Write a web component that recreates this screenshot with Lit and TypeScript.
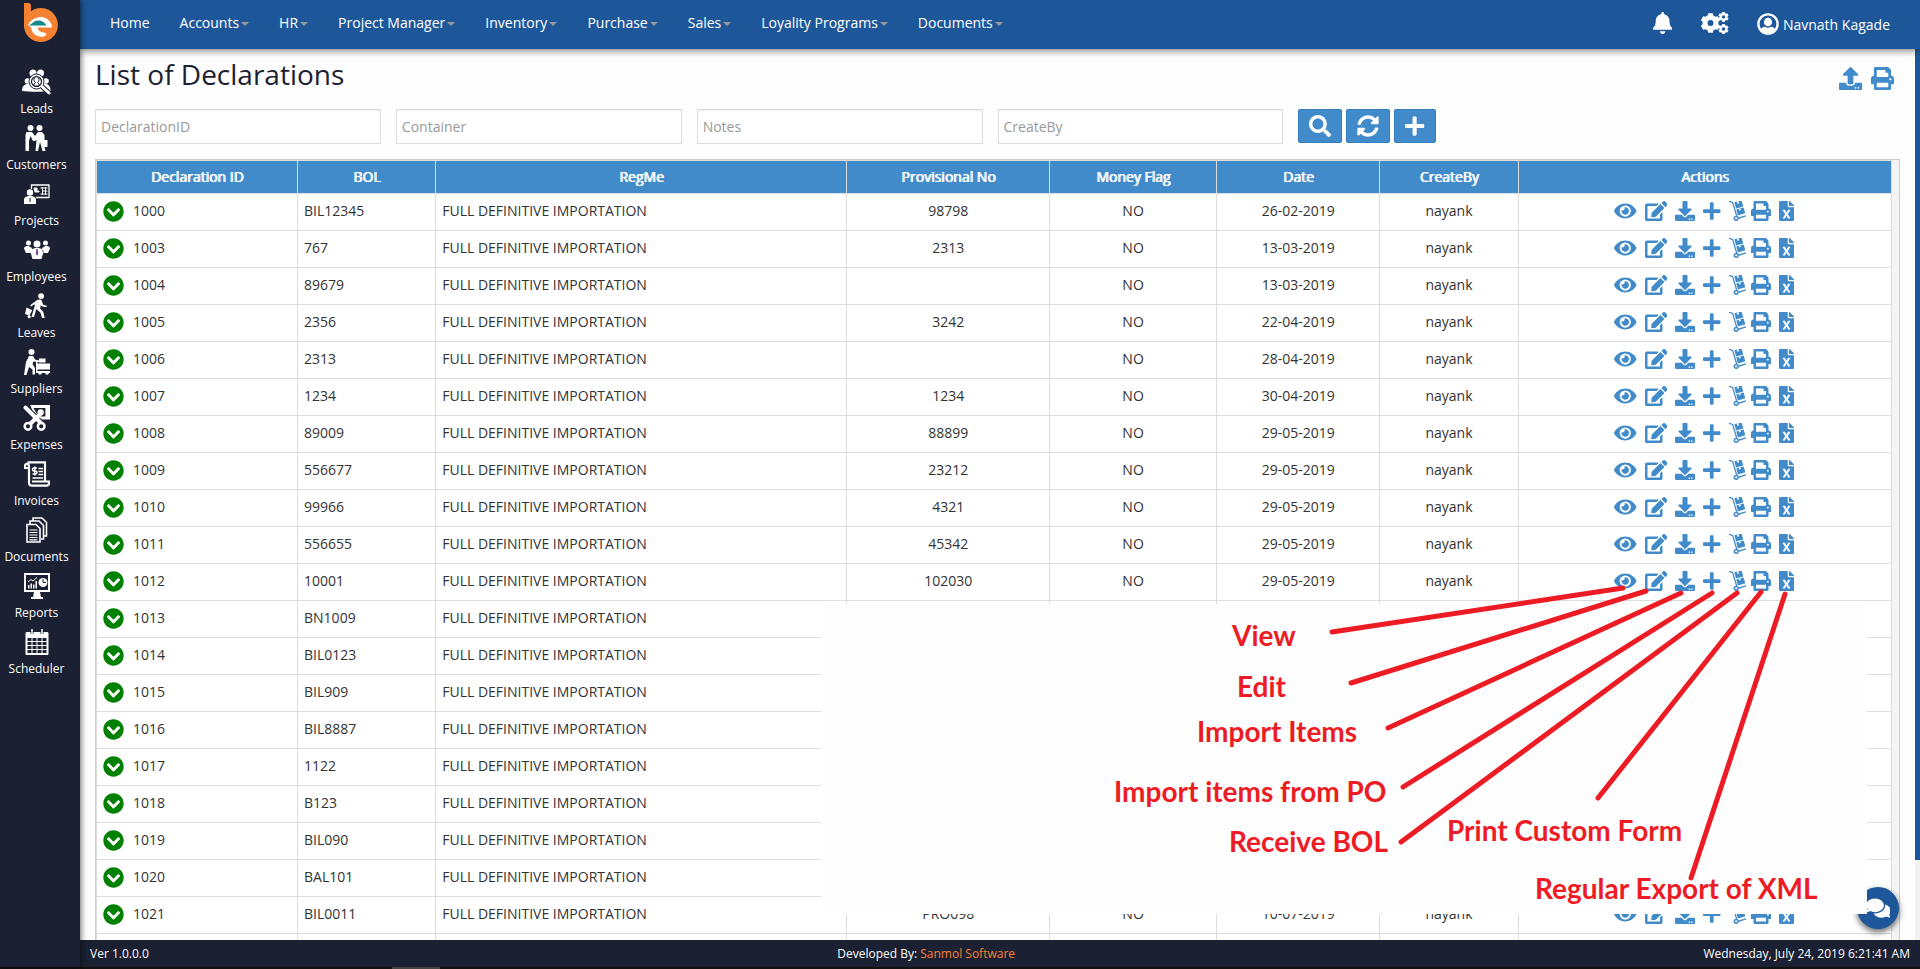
import { LitElement, html, css, svg, nothing } from "lit";
import { customElement, property } from "lit/decorators.js";

interface Glyph { w: number; h: number; body: unknown; }

const solid = (w: number, d: string): Glyph => ({ w, h: 512, body: svg`<path d=${d}></path>` });

/** Builds a toothed wheel outline with a round hole (even-odd). */
function gear(cx: number, cy: number, r: number, teeth: number, hole: number): string {
  const pts: string[] = [];
  const step = (Math.PI * 2) / teeth;
  for (let i = 0; i < teeth; i++) {
    const a = i * step + step / 2;
    for (const [off, rad] of [[-0.34, 0.8], [-0.22, 1], [0.22, 1], [0.34, 0.8]]) {
      const t = a + off * step;
      pts.push(`${(cx + Math.cos(t) * r * rad).toFixed(2)} ${(cy + Math.sin(t) * r * rad).toFixed(2)}`);
    }
  }
  return `M${pts.join("L")}Z M${cx - hole} ${cy}a${hole} ${hole} 0 1 0 ${hole * 2} 0a${hole} ${hole} 0 1 0 ${-hole * 2} 0Z`;
}

const DARK = "#1b2032";

const ICONS: Record<string, Glyph> = {
  bell: solid(448, "M224 512c35.32 0 63.97-28.65 63.97-64H160.03c0 35.35 28.65 64 63.97 64zm215.39-149.71c-19.32-20.76-55.47-51.99-55.47-154.29 0-77.7-54.48-139.9-127.94-155.16V32c0-17.67-14.32-32-31.98-32s-31.98 14.33-31.98 32v20.84C118.56 68.1 64.08 130.3 64.08 208c0 102.3-36.15 133.53-55.47 154.29-6 6.45-8.66 14.16-8.61 21.71.11 16.4 12.98 32 32.1 32h383.8c19.12 0 32-15.6 32.1-32 .05-7.55-2.61-15.27-8.61-21.71z"),
  eye: solid(576, "M572.52 241.4C518.29 135.59 410.93 64 288 64S57.68 135.64 3.48 241.41a32.35 32.35 0 0 0 0 29.19C57.71 376.41 165.07 448 288 448s230.32-71.64 284.52-177.41a32.35 32.35 0 0 0 0-29.19zM288 400a144 144 0 1 1 144-144 143.93 143.93 0 0 1-144 144zm0-240a95.31 95.31 0 0 0-25.31 3.79 47.85 47.85 0 0 1-66.9 66.9A95.78 95.78 0 1 0 288 160z"),
  edit: solid(576, "M402.6 83.2l90.2 90.2c3.8 3.8 3.8 10 0 13.8L274.4 405.6l-92.8 10.3c-12.4 1.4-22.9-9.1-21.5-21.5l10.3-92.8L388.8 83.2c3.8-3.8 10-3.8 13.8 0zm162-22.9l-48.8-48.8c-15.2-15.2-39.9-15.2-55.2 0l-35.4 35.4c-3.8 3.8-3.8 10 0 13.8l90.2 90.2c3.8 3.8 10 3.8 13.8 0l35.4-35.4c15.2-15.3 15.2-40 0-55.2zM384 346.2V448H64V128h229.8c3.2 0 6.2-1.3 8.5-3.5l40-40c7.6-7.6 2.2-20.5-8.5-20.5H48C21.5 64 0 85.5 0 112v352c0 26.5 21.5 48 48 48h352c26.5 0 48-21.5 48-48V306.2c0-10.7-12.9-16-20.5-8.5l-40 40c-2.2 2.3-3.5 5.3-3.5 8.5z"),
  download: solid(512, "M216 0h80c13.3 0 24 10.7 24 24v168h87.7c17.8 0 26.7 21.5 14.1 34.1L269.7 378.3c-7.5 7.5-19.8 7.5-27.3 0L90.1 226.1c-12.6-12.6-3.7-34.1 14.1-34.1H192V24c0-13.3 10.7-24 24-24zm296 376v112c0 13.3-10.7 24-24 24H24c-13.3 0-24-10.7-24-24V376c0-13.3 10.7-24 24-24h146.7l49 49c20.1 20.1 52.5 20.1 72.6 0l49-49H488c13.3 0 24 10.7 24 24zm-124 88c0-11-9-20-20-20s-20 9-20 20 9 20 20 20 20-9 20-20zm64 0c0-11-9-20-20-20s-20 9-20 20 9 20 20 20 20-9 20-20z"),
  upload: solid(512, "M296 384h-80c-13.3 0-24-10.7-24-24V192h-87.7c-17.8 0-26.7-21.5-14.1-34.1L242.3 5.7c7.5-7.5 19.8-7.5 27.3 0l152.2 152.2c12.6 12.6 3.7 34.1-14.1 34.1H320v168c0 13.3-10.7 24-24 24zm216-8v112c0 13.3-10.7 24-24 24H24c-13.3 0-24-10.7-24-24V376c0-13.3 10.7-24 24-24h136v8c0 30.9 25.1 56 56 56h80c30.9 0 56-25.1 56-56v-8h136c13.3 0 24 10.7 24 24zm-124 88c0-11-9-20-20-20s-20 9-20 20 9 20 20 20 20-9 20-20zm64 0c0-11-9-20-20-20s-20 9-20 20 9 20 20 20 20-9 20-20z"),
  plus: solid(448, "M416 208H272V64c0-17.67-14.33-32-32-32h-32c-17.67 0-32 14.33-32 32v144H32c-17.67 0-32 14.33-32 32v32c0 17.67 14.33 32 32 32h144v144c0 17.67 14.33 32 32 32h32c17.67 0 32-14.33 32-32V304h144c17.67 0 32-14.33 32-32v-32c0-17.67-14.33-32-32-32z"),
  print: solid(512, "M448 192V77.25c0-8.49-3.37-16.62-9.37-22.63L393.37 9.37c-6-6-14.14-9.37-22.63-9.37H96C78.33 0 64 14.33 64 32v160c-35.35 0-64 28.65-64 64v112c0 8.84 7.16 16 16 16h48v96c0 17.67 14.33 32 32 32h320c17.67 0 32-14.33 32-32v-96h48c8.84 0 16-7.16 16-16V256c0-35.35-28.65-64-64-64zm-64 256H128v-96h256v96zm0-224H128V64h192v48c0 8.84 7.16 16 16 16h48v96zm48 72c-13.25 0-24-10.75-24-24 0-13.26 10.75-24 24-24s24 10.74 24 24c0 13.25-10.75 24-24 24z"),
  excel: solid(384, "M224 136V0H24C10.7 0 0 10.7 0 24v464c0 13.3 10.7 24 24 24h336c13.3 0 24-10.7 24-24V160H248c-13.2 0-24-10.8-24-24zm60.1 106.5L224 336l60.1 93.5c5.1 8-.6 18.5-10.1 18.5h-34.9c-4.4 0-8.5-2.4-10.6-6.3C208.9 405.5 192 373 192 373c-6.4 14.8-10 20-36.6 68.8-2.1 3.9-6.1 6.3-10.5 6.3H110c-9.5 0-15.2-10.5-10.1-18.5l60.3-93.5-60.3-93.5c-5.2-8 .6-18.5 10.1-18.5h34.8c4.4 0 8.5 2.4 10.6 6.3 26.1 48.8 20 33.6 36.6 68.5 0 0 6.1-11.7 36.6-68.5 2.1-3.9 6.2-6.3 10.6-6.3H274c9.5-.1 15.2 10.4 10.1 18.4zM384 121.9v6.1H256V0h6.1c6.4 0 12.5 2.5 17 7l97.9 98c4.5 4.5 7 10.6 7 16.9z"),
  search: solid(512, "M505 442.7L405.3 343c-4.5-4.5-10.6-7-17-7H372c27.6-35.3 44-79.7 44-128C416 93.1 322.9 0 208 0S0 93.1 0 208s93.1 208 208 208c48.3 0 92.7-16.4 128-44v16.3c0 6.4 2.5 12.5 7 17l99.7 99.7c9.4 9.4 24.6 9.4 33.9 0l28.3-28.3c9.4-9.4 9.4-24.6.1-34zM208 336c-70.7 0-128-57.2-128-128 0-70.7 57.2-128 128-128 70.7 0 128 57.2 128 128 0 70.7-57.2 128-128 128z"),
  refresh: solid(512, "M370.72 133.28C339.458 104.008 298.888 87.962 255.848 88c-77.458.068-144.328 53.178-162.791 126.85-1.344 5.363-6.122 9.15-11.651 9.15H24.103c-7.498 0-13.194-6.807-11.807-14.176C33.933 94.924 134.813 8 256 8c66.448 0 126.791 26.136 171.315 68.685L463.03 40.97C478.149 25.851 504 36.559 504 57.941V192c0 13.255-10.745 24-24 24H345.941c-21.382 0-32.09-25.851-16.971-40.971l41.75-41.749zM32 296h134.059c21.382 0 32.09 25.851 16.971 40.971l-41.75 41.75c31.262 29.273 71.835 45.319 114.876 45.28 77.418-.07 144.315-53.144 162.787-126.849 1.344-5.363 6.122-9.15 11.651-9.15h57.304c7.498 0 13.194 6.807 11.807 14.176C478.067 417.076 377.187 504 256 504c-66.448 0-126.791-26.136-171.315-68.685L48.97 471.03C33.851 486.149 8 475.441 8 454.059V320c0-13.255 10.745-24 24-24z"),
  expand: solid(512, "M504 256c0 137-111 248-248 248S8 393 8 256 119 8 256 8s248 111 248 248zM273 369.9l135.5-135.5c9.4-9.4 9.4-24.6 0-33.9l-17-17c-9.4-9.4-24.6-9.4-33.9 0L256 285.1 154.4 183.5c-9.4-9.4-24.6-9.4-33.9 0l-17 17c-9.4 9.4-9.4 24.6 0 33.9L239 369.9c9.4 9.4 24.6 9.4 34 0z"),
  comments: solid(576, "M416 192c0-88.4-93.1-160-208-160S0 103.6 0 192c0 34.3 14.1 65.9 38 92-13.4 30.2-35.5 54.2-35.8 54.5-2.2 2.3-2.8 5.7-1.5 8.7S4.8 352 8 352c36.6 0 66.9-12.3 88.7-25 32.2 15.7 70.3 25 111.3 25 114.9 0 208-71.6 208-160zm122 220c23.9-26 38-57.7 38-92 0-66.9-53.5-124.2-129.3-148.1.9 6.6 1.3 13.3 1.3 20.1 0 105.9-107.7 192-240 192-10.8 0-21.3-.8-31.7-1.9C207.8 439.6 281.8 480 368 480c41 0 79.1-9.2 111.3-25 21.8 12.7 52.1 25 88.7 25 3.2 0 6.1-1.9 7.3-4.8 1.3-2.9.7-6.3-1.5-8.7-.3-.3-22.4-24.2-35.8-54.5z"),
  cogs: { w: 28, h: 22, body: svg`<path fill-rule="evenodd" d=${gear(9.5, 11, 10, 6, 3)}></path><path fill-rule="evenodd" d=${gear(22.5, 4.9, 5.2, 6, 1.7)}></path><path fill-rule="evenodd" d=${gear(22.5, 17, 5.2, 6, 1.7)}></path>` },
  user: { w: 22, h: 22, body: svg`<circle cx="11" cy="11" r="9.600" fill="none" stroke="currentColor" stroke-width="2.400"></circle><ellipse cx="11" cy="9" rx="4.100" ry="4.300"></ellipse><path d="M3.600 17c1-2.400 3-3.300 4.800-3.100 1.600 1 3.600 1 5.200 0 1.800-.2 3.800.7 4.800 3.100-4 4.600-10.800 4.600-14.800 0z"></path>` },
  dolly: { w: 17, h: 20, body: svg`<path d="M0 .3l3.600 1.100L7.700 15" fill="none" stroke="currentColor" stroke-width="1.300"></path><circle cx="7.200" cy="17.300" r="1.900" fill="none" stroke="currentColor" stroke-width="1.500"></circle><path d="M9.300 16.600l7.500-2.400.4 1.300-7.500 2.400z"></path><path d="M5.400 1.300l2.400-.7.600 2.200 1.600-.4-.6-2.200 3.200-.6 1.700 6-7.300 2z"></path><path d="M7.300 8.500l2.400-.7.500 1.800 1.600-.5-.5-1.800 3.300-.8 1.700 5.700-7.400 2.200z"></path>` },
  logo: { w: 36, h: 42, body: svg`<path d="M1 0h4.500C7.200 0 8 1.300 8 3v5.200A17 17 0 1 1 1 24z" fill="#f58233"></path><path d="M5 22.500C8 14 23 9 28.800 22v2.500H14.500c1 5 5.500 4.500 8.500 5.500 1 2-1.500 4-4.500 3.800-6.500-.4-10-4.300-10.500-9.800z" fill="#fff"></path><path d="M5 22.600c4-1 5.500-5 10-5 4 0 6.500 1.600 8.500 5z" fill="#138a8a"></path>` },
  leads: { w: 29, h: 26, body: svg`<circle cx="11" cy="4" r="3.500"></circle><circle cx="18.500" cy="4" r="3.500"></circle><path d="M6 13a8 6 0 0 1 17 0v8H6z"></path><circle cx="5.500" cy="12" r="2.800"></circle><circle cx="24" cy="12" r="2.800"></circle><path d="M0 22c0-5 2.500-7 5.500-7h18c3 0 5 2 5 7-7 1-21 1-28.500 0z"></path><circle cx="14.500" cy="12.500" r="7.500" fill="#fff" stroke=${DARK} stroke-width="1"></circle><circle cx="14.500" cy="12.500" r="5" fill="#fff" stroke=${DARK} stroke-width="1.200"></circle><path d="M12 17v-2l1.500-1.500a2.500 3 0 1 1 2 0L17 15v2z" fill="#fff" stroke=${DARK}></path><path d="M20 17.500l7.500 7" stroke=${DARK} stroke-width="5"></path><path d="M20 17.500l7 6.500" stroke="#fff" stroke-width="3" stroke-linecap="round"></path>` },
  customers: { w: 26, h: 26, body: svg`<circle cx="6.500" cy="3" r="3"></circle><circle cx="15.500" cy="3" r="3"></circle><path d="M2.500 7h5.500l3 4 3-4h4l2.500 3v5h3v7h-3l1 4h-3l-2.500-9-2 9h-2.500l1-11-2 1h-1.500L6.500 11 5 16v10H1.500V10z"></path>` },
  projects: { w: 26, h: 20, body: svg`<path d="M7.500 5V1H25v12.500H12" fill="none" stroke="currentColor" stroke-width="1.300"></path><path d="M10 4h3v3h2v1h-4zM16.500 4h7M19 7h4.500M16.500 10h7M18.500 3v8M21.500 3v8" stroke="currentColor"></path><circle cx="6" cy="8.500" r="3.200"></circle><path d="M0 20v-4c0-3 2.500-4 6-4s6 1 6 4v4z"></path><path d="M6 14v4" stroke=${DARK}></path>` },
  employees: { w: 26, h: 20, body: svg`<circle cx="13" cy="4" r="3.500"></circle><circle cx="4.500" cy="3" r="2.500"></circle><circle cx="21.500" cy="3" r="2.500"></circle><path d="M0 8.500c0-2 2-2.500 4.500-2.500L8 8l-1 5H2zM26 8.500c0-2-2-2.500-4.500-2.500L18 8l1 5h5zM6.500 12c0-3 3-4 6.500-4s6.500 1 6.500 4l-2 7h-9z"></path><path d="M12.300 9h1.500l.5 5-1.200 1.500L11.800 14z" fill="#7a4a9a"></path>` },
  leaves: { w: 22, h: 25, body: svg`<circle cx="15.500" cy="3" r="2.800"></circle><path d="M12 6.500l3.500-.2 2 5 3.500 1-.5 1.500-4.500-1-.8-1.200-.7 3.400 3 3 1.500 6h-2.600l-1.500-5-4-3.500-2.200 7.500H6.200L9.500 12l-.6-1.200-3 2.200-1-1.200zM1.500 14l5.500 2.500-3 5.500L0 20z"></path><circle cx="4" cy="22.800" r="1.500"></circle>` },
  suppliers: { w: 26, h: 26, body: svg`<circle cx="7.500" cy="3" r="3"></circle><path d="M5 7h4l2 3.500 4 1V13l-5.500-.5L8.500 15l2.500 4v6.500H8.500v-5L5 18l-2.500 8H0L2 13zM15 9.500h6.500v4H15zM13 14.500h13v6H13zM12 12h1.500v10H26v2H12z"></path><circle cx="16" cy="24" r="1.800"></circle><circle cx="23" cy="24" r="1.800"></circle>` },
  expenses: { w: 26, h: 25, body: svg`<path d="M7 0h19v14H12z"></path><path d="M10 3h11.500v8H15z" fill=${DARK}></path><circle cx="17" cy="7" r="3"></circle><path d="M2.500 2.500L18 18" stroke=${DARK} stroke-width="6"></path><path d="M2.500 2.500L18 18M17.500 8L6 19" stroke="currentColor" stroke-width="4" stroke-linecap="round"></path><circle cx="4.800" cy="20.500" r="3.200" fill=${DARK} stroke="currentColor" stroke-width="2.400"></circle><circle cx="17.500" cy="20.500" r="3.200" fill=${DARK} stroke="currentColor" stroke-width="2.400"></circle>` },
  invoices: { w: 26, h: 26, body: svg`<path d="M5 22.500V5.500C5 2 1 2 1 5v2h3.500M3.500 1.300H21V20M8 20.500h17c.5 3-1 4.200-3 4.200H8c-2 0-3-1-3-3" fill="none" stroke="currentColor" stroke-width="2.200"></path><path d="M13 7H10a1.500 1.500 0 0 0 0 3h1.500a1.500 1.500 0 0 1 0 3H8.500M10.800 5.500v9M14.500 7.500h4.500M14.500 10.500h4.500M14.500 13.500h4.500M8.500 17h10.500" fill="none" stroke="currentColor" stroke-width="1.500"></path>` },
  documents: { w: 22, h: 26, body: svg`<path d="M1 7.500h9l4 4V25H1zM4 7V4h9l4.500 4.500V22H15M7 3.500V1h9l4.500 4.500V19H18" fill="none" stroke="currentColor" stroke-width="1.600"></path><path d="M3.500 13h8M3.500 15.500h8M3.500 18h8M3.500 20.500h8M3.500 22.800h8" stroke="currentColor" stroke-width="1.200"></path>` },
  reports: { w: 26, h: 26, body: svg`<path d="M1 1h24v17H1z" fill="none" stroke="currentColor" stroke-width="2"></path><path d="M10 19h6l1 5h2v2H7v-2h2zM4 12h1.500v3.500H4zM6.500 10.500H8v5H6.500zM9 11.500h1.500v4H9zM11.500 8H13v7.500h-1.500z"></path><path d="M4 9l3-2.500 2 1.500 4-3.500" fill="none" stroke="currentColor"></path><circle cx="19" cy="9.500" r="4.500"></circle><path d="M19 6v3.500h3" fill="none" stroke=${DARK}></path>` },
  scheduler: { w: 24, h: 26, body: svg`<path fill-rule="evenodd" d="M2 3h20c1 0 1.500.5 1.500 1.500v20c0 1-.5 1.500-1.500 1.500H2C1 26 .5 25.500 .5 24.500v-20C.5 3.500 1 3 2 3zM2.500 9v3h4V9zm5 0v3h4V9zm5 0v3h4V9zm5 0v3h4V9zm-15 4v3h4v-3zm5 0v3h4v-3zm5 0v3h4v-3zm5 0v3h4v-3zm-15 4v3h4v-3zm5 0v3h4v-3zm5 0v3h4v-3zm5 0v3h4v-3zm-15 4v3h4v-3zm5 0v3h4v-3zm5 0v3h4v-3zm5 0v3h4v-3z"></path><path d="M7 0v5M17 0v5" stroke=${DARK} stroke-width="3"></path><path d="M7 0v5M17 0v5" stroke="currentColor" stroke-width="1.500"></path>` },
};

@customElement("ui-icon")
export class UiIcon extends LitElement {
  @property() name = "";
  static styles = css`
    :host { display: inline-flex; height: 20px; }
    svg { display: block; height: 100%; width: auto; fill: currentColor; }
  `;
  render() {
    const g = ICONS[this.name];
    return g
      ? html`<svg viewBox="0 0 ${g.w} ${g.h}" aria-hidden="true" preserveAspectRatio="xMidYMid meet">${g.body}</svg>`
      : nothing;
  }
}

const MODULES = ["Leads", "Customers", "Projects", "Employees", "Leaves", "Suppliers", "Expenses", "Invoices", "Documents", "Reports", "Scheduler"];
const MENU = ["Home", "Accounts", "HR", "Project Manager", "Inventory", "Purchase", "Sales", "Loyality Programs", "Documents"];
const FILTERS = ["DeclarationID", "Container", "Notes", "CreateBy"];
const COLUMNS = ["Declaration ID", "BOL", "RegMe", "Provisional No", "Money Flag", "Date", "CreateBy", "Actions"];
const ACTIONS: [string, string][] = [
  ["eye", "View"], ["edit", "Edit"], ["download", "Import items"], ["plus", "Import items from PO"],
  ["dolly", "Receive BOL"], ["print", "Print custom form"], ["excel", "Regular export of XML"],
];

interface Declaration { id: string; bol: string; provisional?: string; date?: string; }
const ROWS: Declaration[] = [
  { id: "1000", bol: "BIL12345", provisional: "98798", date: "26-02-2019" },
  { id: "1003", bol: "767", provisional: "2313", date: "13-03-2019" },
  { id: "1004", bol: "89679", provisional: "", date: "13-03-2019" },
  { id: "1005", bol: "2356", provisional: "3242", date: "22-04-2019" },
  { id: "1006", bol: "2313", provisional: "", date: "28-04-2019" },
  { id: "1007", bol: "1234", provisional: "1234", date: "30-04-2019" },
  { id: "1008", bol: "89009", provisional: "88899", date: "29-05-2019" },
  { id: "1009", bol: "556677", provisional: "23212", date: "29-05-2019" },
  { id: "1010", bol: "99966", provisional: "4321", date: "29-05-2019" },
  { id: "1011", bol: "556655", provisional: "45342", date: "29-05-2019" },
  { id: "1012", bol: "10001", provisional: "102030", date: "29-05-2019" },
  { id: "1013", bol: "BN1009" },
  { id: "1014", bol: "BIL0123" },
  { id: "1015", bol: "BIL909" },
  { id: "1016", bol: "BIL8887" },
  { id: "1017", bol: "1122" },
  { id: "1018", bol: "B123" },
  { id: "1019", bol: "BIL090" },
  { id: "1020", bol: "BAL101" },
  { id: "1021", bol: "BIL0011", provisional: "PRO098", date: "10-07-2019" },
];

/** Callouts of the legend: text, its origin, and the pointer running to the icon. */
interface Callout { text: string; x: number; y: number; line: [number, number, number, number]; }
const CALLOUTS: Callout[] = [
  { text: "View", x: 411, y: 76, line: [511, 62, 802, 18] },
  { text: "Edit", x: 416, y: 127, line: [530, 113, 825, 21] },
  { text: "Import Items", x: 376, y: 172, line: [567, 158, 860, 23] },
  { text: "Import items from PO", x: 293, y: 232, line: [582, 217, 891, 23] },
  { text: "Receive BOL", x: 408, y: 282, line: [580, 272, 916, 23] },
  { text: "Print Custom Form", x: 626, y: 271, line: [777, 228, 940, 22] },
  { text: "Regular Export of XML", x: 714, y: 329, line: [870, 308, 964, 24] },
];

@customElement("app-root")
export class AppRoot extends LitElement {
  static styles = css`
    :host {
      display: flex;
      flex-direction: column;
      height: 100vh;
      position: relative;
      overflow: hidden;
      background: #fefefe;
      color: #333;
      font: 14px/20px "Open Sans", "Noto Sans", sans-serif;
    }
    * { box-sizing: border-box; }
    a { color: inherit; text-decoration: none; }
    button { font: inherit; color: inherit; border: 0; padding: 0; background: none; cursor: pointer; display: inline-flex; align-items: center; justify-content: center; }
    .shell { flex: 1; display: flex; min-height: 0; }
    .side { width: 80px; flex: none; background: #1b2032; color: #fff; padding: 3px 7px 0 0; z-index: 2; box-shadow: 1px 0 6px rgba(0, 0, 0, 0.6); }
    .brand { display: flex; justify-content: center; padding: 0 0 0 8px; }
    .brand ui-icon { height: 42px; }
    .modules { list-style: none; margin: 20px 0 0; padding: 0; }
    .module { height: 56px; display: flex; flex-direction: column; align-items: center; gap: 2px; font-size: 12px; line-height: 18px; }
    .glyph { height: 33px; display: flex; align-items: center; justify-content: center; }
    .i26 { height: 26px; }
    .i20 { height: 20px; }
    .column { flex: 1; min-width: 0; display: flex; flex-direction: column; }
    .top { height: 49px; flex: none; background: #1e5799; color: #fff; display: flex; align-items: center; padding: 0 30px 0 15px; z-index: 1; box-shadow: 0 1px 8px rgba(0, 0, 0, 0.6); }
    .menu { display: flex; flex: 1; list-style: none; margin: 0; padding: 0 0 4px; }
    .menu a { display: flex; align-items: center; gap: 2px; padding: 0 15px; }
    .caret { border: 4px solid transparent; border-top-color: #999; border-bottom: 0; margin-top: 3px; }
    .user { display: flex; align-items: center; }
    .user ui-icon { height: 22px; }
    .tools { display: flex; gap: 29px; margin-right: 28px; padding-bottom: 3px; }
    .who { gap: 4px; }
    .who ui-icon { margin-bottom: 2px; }
    .body { flex: 1; min-height: 0; display: flex; }
    .track { width: 5px; background: #f1f1f1; flex: none; }
    .thumb { height: 91%; background: #1e5799; }
    main { flex: 1; min-width: 0; padding: 0 15px; display: flex; flex-direction: column; overflow: hidden; }
    .heading { display: flex; flex: none; height: 60px; align-items: flex-start; justify-content: space-between; padding: 5px 6px 0 0; }
    h1 { margin: 0; font-size: 28px; line-height: 40px; font-weight: 400; color: #1b2032; }
    .heading div { display: flex; gap: 9px; padding-top: 13px; color: #428bca; }
    .heading ui-icon { height: 23px; }
    .filters { display: grid; grid-template-columns: repeat(6, 1fr); flex: none; margin-bottom: 15px; }
    .field { padding-right: 15px; display: block; }
    .field input { display: block; width: 100%; height: 35px; border: 1px solid #ddd; border-radius: 0; background: #fff; padding: 0 5px; font: inherit; color: #333; box-shadow: inset 0 1px 1px rgba(0, 0, 0, 0.075); }
    .field input::placeholder { color: #999; opacity: 1; }
    .buttons { display: flex; gap: 4px; }
    .buttons button { height: 34px; padding: 0 10px; background: #428bca; border: 1px solid #357ebd; border-radius: 2px; color: #fff; }
    .buttons ui-icon { height: 22px; }
    .grid { flex: 1; min-height: 0; overflow: hidden; display: flex; align-items: flex-start; border: 1px solid #ccc; border-bottom: 0; background: #f4f4f4; padding-right: 7px; }
    table { width: 100%; border-collapse: collapse; table-layout: fixed; background: #fff; }
    th, td { border: 1px solid #ddd; padding: 0 6px; height: 37px; text-align: left; font-weight: 400; }
    td { padding-bottom: 2px; }
    th { height: 33px; background: #428bca; color: #fff; text-align: center; text-shadow: 1px 0 currentColor; }
    td.mid { text-align: center; }
    .c1 { width: 11.2%; } .c2 { width: 7.7%; } .c3 { width: 22.9%; } .c4 { width: 11.3%; }
    .c5 { width: 9.3%; } .c6 { width: 9.1%; } .c7 { width: 7.7%; }
    .id { display: flex; align-items: center; gap: 9px; }
    .id button { color: #008000; }
    .id ui-icon { height: 21px; }
    .id span { padding-bottom: 1px; }
    .acts { display: flex; justify-content: center; gap: 8px; padding-right: 2px; color: #428bca; }
    .acts button:nth-child(6) { margin-left: -3px; }
    footer { height: 27px; flex: none; background: #1b2032; color: #fff; font-size: 12px; display: flex; align-items: center; justify-content: space-between; padding: 0 10px; z-index: 1; }
    footer a { color: #f58233; }
    .dock { height: 2px; flex: none; background: #111; padding-left: 392px; }
    .dock div { width: 48px; height: 2px; background: #444; }
    .chat { position: absolute; right: 21px; bottom: 40px; width: 42px; height: 42px; border-radius: 50%; background: #1e5799; color: #fff; z-index: 3; box-shadow: 0 3px 6px rgba(0, 0, 0, 0.6); }
    .chat ui-icon { height: 22px; }
    .legend { position: absolute; top: 570px; right: 53px; width: 1046px; height: 344px; z-index: 4; pointer-events: none; }
    .legend svg { display: block; width: 100%; height: 100%; }
    .patch { fill: #fefefe; }
    .legend line { stroke: #ed1c24; stroke-width: 5; stroke-linecap: round; }
    .legend text { fill: #ed1c24; font: 700 28px Lato, sans-serif; }
  `;

  private renderRow(r: Declaration) {
    const full = r.date !== undefined;
    return html`<tr>
      <td><div class="id"><button aria-label="Expand ${r.id}"><ui-icon name="expand"></ui-icon></button><span>${r.id}</span></div></td>
      <td>${r.bol}</td>
      <td>FULL DEFINITIVE IMPORTATION</td>
      <td class="mid">${r.provisional}</td>
      <td class="mid">${full ? "NO" : nothing}</td>
      <td class="mid">${r.date}</td>
      <td class="mid">${full ? "nayank" : nothing}</td>
      <td>${full
        ? html`<div class="acts">${ACTIONS.map(([icon, label]) => html`<button aria-label=${label}><ui-icon name=${icon}></ui-icon></button>`)}</div>`
        : nothing}</td>
    </tr>`;
  }

  render() {
    return html`
      <div class="shell">
        <aside class="side">
          <a class="brand" href="#" aria-label="Home"><ui-icon name="logo"></ui-icon></a>
          <ul class="modules">
            ${MODULES.map((m) => html`<li><a class="module" href="#">
              <span class="glyph"><ui-icon class=${m === "Projects" || m === "Employees" ? "i20" : "i26"} name=${m.toLowerCase()}></ui-icon></span>${m}</a></li>`)}
          </ul>
        </aside>
        <div class="column">
          <header class="top">
            <ul class="menu">
              ${MENU.map((m, i) => html`<li><a href="#">${m}${i ? html`<span class="caret"></span>` : nothing}</a></li>`)}
            </ul>
            <div class="user">
              <div class="tools">
                <button aria-label="Notifications"><ui-icon name="bell"></ui-icon></button>
                <button aria-label="Settings"><ui-icon name="cogs"></ui-icon></button>
              </div>
              <button class="who"><ui-icon name="user"></ui-icon>Navnath Kagade</button>
            </div>
          </header>
          <div class="body">
            <main>
              <div class="heading">
                <h1>List of Declarations</h1>
                <div>
                  <button aria-label="Upload"><ui-icon name="upload"></ui-icon></button>
                  <button aria-label="Print"><ui-icon name="print"></ui-icon></button>
                </div>
              </div>
              <form class="filters" @submit=${(e: Event) => e.preventDefault()}>
                ${FILTERS.map((f) => html`<label class="field"><input type="text" aria-label=${f} placeholder=${f}></label>`)}
                <div class="buttons">
                  <button aria-label="Search"><ui-icon name="search"></ui-icon></button>
                  <button type="reset" aria-label="Refresh"><ui-icon name="refresh"></ui-icon></button>
                  <button type="button" aria-label="Add"><ui-icon name="plus"></ui-icon></button>
                </div>
              </form>
              <div class="grid">
                <table>
                  <thead><tr>${COLUMNS.map((c, i) => html`<th class="c${i + 1}">${c}</th>`)}</tr></thead>
                  <tbody>
                    ${ROWS.map((r) => this.renderRow(r))}
                    <tr>${COLUMNS.map(() => html`<td></td>`)}</tr>
                  </tbody>
                </table>
              </div>
            </main>
            <div class="track"><div class="thumb"></div></div>
          </div>
          <footer>
            <span>Ver 1.0.0.0</span>
            <span>Developed By: <a href="#">Sanmol Software</a></span>
            <span>Wednesday, July 24, 2019 6:21:41 AM</span>
          </footer>
        </div>
      </div>
      <div class="dock"><div></div></div>
      <button class="chat" aria-label="Chat"><ui-icon name="comments"></ui-icon></button>
      <div class="legend">
        <svg viewBox="0 0 1046 344">
          <rect class="patch" y="34" width="1046" height="310"></rect>
          ${CALLOUTS.map((c) => svg`<line x1=${c.line[0]} y1=${c.line[1]} x2=${c.line[2]} y2=${c.line[3]}></line><text x=${c.x} y=${c.y}>${c.text}</text>`)}
        </svg>
      </div>
    `;
  }
}
